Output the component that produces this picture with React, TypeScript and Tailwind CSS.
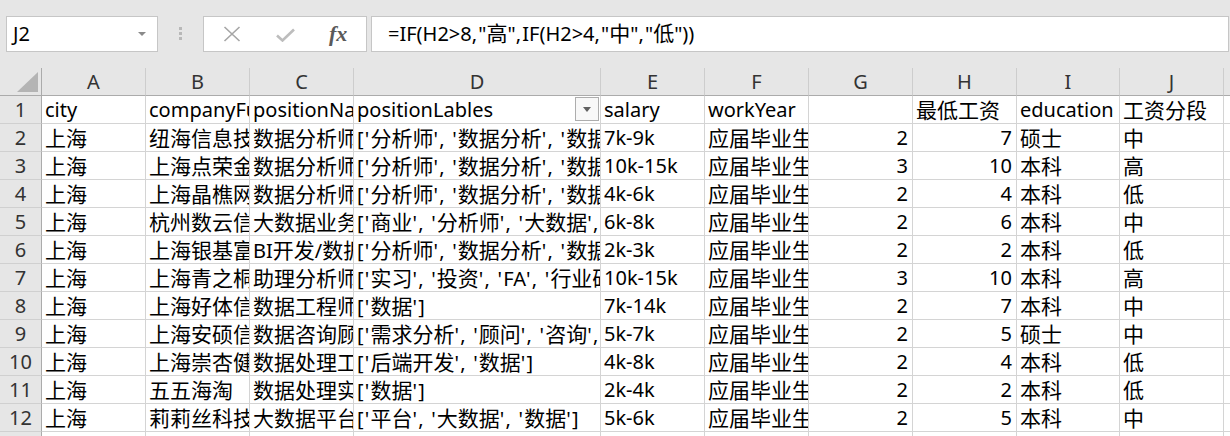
import React from "react";

const font = { fontFamily: '"Noto Sans", "Noto Sans CJK SC", sans-serif' };

const letters = ["A", "B", "C", "D", "E", "F", "G", "H", "I", "J"];

type Row = string[];
const header: Row = [
  "city",
  "companyFullName",
  "positionName",
  "positionLables",
  "salary",
  "workYear",
  "",
  "最低工资",
  "education",
  "工资分段",
];

const data: Row[] = [
  ["上海", "纽海信息技术（上海）有限公司", "数据分析师", "['分析师', '数据分析', '数据']", "7k-9k", "应届毕业生", "2", "7", "硕士", "中"],
  ["上海", "上海点荣金融信息服务有限公司", "数据分析师", "['分析师', '数据分析', '数据', '大数据']", "10k-15k", "应届毕业生", "3", "10", "本科", "高"],
  ["上海", "上海晶樵网络信息技术有限公司", "数据分析师", "['分析师', '数据分析', '数据']", "4k-6k", "应届毕业生", "2", "4", "本科", "低"],
  ["上海", "杭州数云信息技术有限公司", "大数据业务分析师", "['商业', '分析师', '大数据', '数据']", "6k-8k", "应届毕业生", "2", "6", "本科", "中"],
  ["上海", "上海银基富力信息技术有限公司", "BI开发/数据分析师", "['分析师', '数据分析', '数据', 'BI']", "2k-3k", "应届毕业生", "2", "2", "本科", "低"],
  ["上海", "上海青之桐投资管理有限公司", "助理分析师", "['实习', '投资', 'FA', '行业研究']", "10k-15k", "应届毕业生", "3", "10", "本科", "高"],
  ["上海", "上海好体信息科技有限公司", "数据工程师", "['数据']", "7k-14k", "应届毕业生", "2", "7", "本科", "中"],
  ["上海", "上海安硕信息技术股份有限公司", "数据咨询顾问", "['需求分析', '顾问', '咨询', '数据']", "5k-7k", "应届毕业生", "2", "5", "硕士", "中"],
  ["上海", "上海崇杏健康管理咨询有限公司", "数据处理工程师", "['后端开发', '数据']", "4k-8k", "应届毕业生", "2", "4", "本科", "低"],
  ["上海", "五五海淘", "数据处理实习生", "['数据']", "2k-4k", "应届毕业生", "2", "2", "本科", "低"],
  ["上海", "莉莉丝科技（上海）有限公司", "大数据平台工程师", "['平台', '大数据', '数据']", "5k-6k", "应届毕业生", "2", "5", "本科", "中"],
];

const CJK = /([\u3400-\u9fff\uff00-\uffef]+)/;
const PUNCT = /(['\[\], ]+)/;

function Mixed({ text }: { text: string }) {
  const parts = text.split(CJK);
  return (
    <>
      {parts.map((p, k) =>
        k % 2 === 1 ? (
          <span key={k} className="text-[21px]">
            {p}
          </span>
        ) : (
          p.split(PUNCT).map((q, m) =>
            m % 2 === 1 ? (
              <span key={k + "-" + m} className="tracking-[1.2px]">
                {q}
              </span>
            ) : (
              <span key={k + "-" + m}>{q}</span>
            )
          )
        )
      )}
    </>
  );
}

function Cell({ text, right }: { text: string; right?: boolean }) {
  return (
    <div
      className={
        "relative h-[28px] overflow-hidden whitespace-nowrap border-b border-r border-[#d4d4d4] bg-white text-[20px] leading-[28px] text-black " +
        (right ? "pr-[4px] text-right" : "pl-[3px]")
      }
    >
      <Mixed text={text} />
    </div>
  );
}

export default function App() {
  const rows = [header, ...data];
  return (
    <div className="h-[436px] w-[1230px] overflow-hidden bg-[#e6e6e6]" style={font}>
      {/* toolbar */}
      <div className="flex h-[68px] items-start pl-[6px] pt-[16px]">
        <div className="relative flex h-[36px] w-[152px] items-center border border-[#c6c6c6] bg-white pl-[6px] text-[20px] text-black">
          J2
          <div className="absolute right-[11px] top-[15px] h-0 w-0 border-l-[4px] border-r-[4px] border-t-[4px] border-l-transparent border-r-transparent border-t-[#8a8a8a]" />
        </div>
        <div className="flex w-[45px] flex-col items-center gap-[2px] pt-[11px]">
          <div className="h-[3px] w-[3px] bg-[#b8b8b8]" />
          <div className="h-[3px] w-[3px] bg-[#b8b8b8]" />
          <div className="h-[3px] w-[3px] bg-[#b8b8b8]" />
        </div>
        <div className="flex h-[36px] w-[164px] items-center border border-[#c6c6c6] bg-white">
          <svg className="ml-[19px]" width="18" height="16" viewBox="0 0 18 16">
            <path d="M1.5 1 L16.5 15 M16.5 1 L1.5 15" stroke="#a6a6a6" strokeWidth="1.6" fill="none" />
          </svg>
          <svg className="ml-[35px] mt-[2px]" width="19" height="14" viewBox="0 0 19 14">
            <path d="M1 7.5 L6.5 12.5 L18 1.5" stroke="#bdbdbd" strokeWidth="2.6" fill="none" />
          </svg>
          <span
            className="ml-[34px] text-[22px] font-bold italic leading-none text-[#5a5a5a]"
            style={{ fontFamily: '"Liberation Serif", serif' }}
          >
            fx
          </span>
        </div>
        <div className="ml-[4px] mr-[1px] flex h-[36px] flex-1 items-center whitespace-nowrap border border-[#c6c6c6] bg-white pl-[16px] text-[20px] text-black">
          <Mixed text={'=IF(H2>8,"高",IF(H2>4,"中","低"))'} />
        </div>
      </div>

      {/* grid */}
      <div className="grid grid-cols-[42px_104px_104px_104px_247px_104px_104px_104px_104px_103px_104px_1fr]">
        {/* header row */}
        <div className="relative h-[28px] border-b border-r border-[#ababab] bg-[#e6e6e6]">
          <div className="absolute bottom-[3px] right-[3px] h-0 w-0 border-b-[20px] border-l-[21px] border-b-[#b4b4b4] border-l-transparent" />
        </div>
        {letters.map((l) => (
          <div
            key={l}
            className="flex h-[28px] items-center justify-center border-b border-r border-b-[#ababab] border-r-[#cdcdcd] bg-[#e6e6e6] text-[20px] text-[#333]"
          >
            {l}
          </div>
        ))}
        <div className="h-[28px] border-b border-[#ababab] bg-[#e6e6e6]" />

        {rows.map((r, i) => (
          <React.Fragment key={i}>
            <div className="flex h-[28px] items-center justify-center border-b border-r border-b-[#d0d0d0] border-r-[#ababab] bg-[#e6e6e6] text-[20px] text-[#333]">
              {i + 1}
            </div>
            {r.map((c, j) =>
              i === 0 && j === 3 ? (
                <div
                  key={j}
                  className="relative h-[28px] overflow-hidden whitespace-nowrap border-b border-r border-[#d4d4d4] bg-white pl-[3px] text-[20px] leading-[28px] text-black"
                >
                  {c}
                  <div className="absolute right-[1px] top-[1px] flex h-[24px] w-[24px] items-center justify-center border border-[#adadad] bg-[#f8f8f8]">
                    <div className="h-0 w-0 border-l-[4px] border-r-[4px] border-t-[5px] border-l-transparent border-r-transparent border-t-[#606060]" />
                  </div>
                </div>
              ) : (
                <Cell key={j} text={c} right={i > 0 && (j === 6 || j === 7)} />
              )
            )}
            <div className="h-[28px] border-b border-[#d4d4d4] bg-white" />
          </React.Fragment>
        ))}
        <div className="h-[28px] border-r border-[#ababab] bg-[#e6e6e6]" />
        {letters.map((l) => (
          <div key={l} className="h-[28px] border-r border-[#d4d4d4] bg-white" />
        ))}
        <div className="h-[28px] bg-white" />
      </div>
    </div>
  );
}
